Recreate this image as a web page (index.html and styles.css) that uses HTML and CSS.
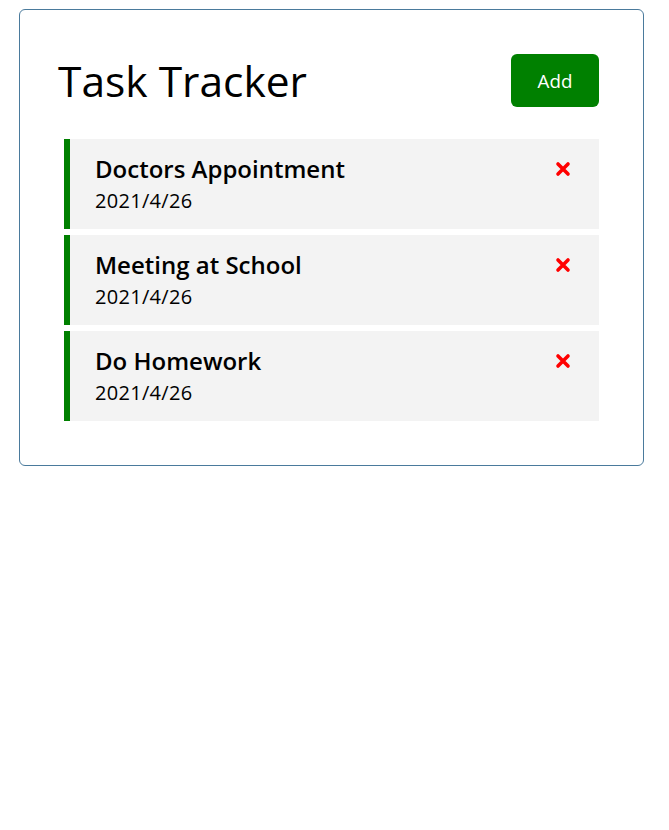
FILE: index.html
```html
<!DOCTYPE html>
<html lang="en">
<head>
<meta charset="utf-8">
<title>Task Tracker</title>
<link rel="stylesheet" href="styles.css">
</head>
<body>
<div class="container">
  <header class="header">
    <h1 class="title">Task Tracker</h1>
    <button class="btn">Add</button>
  </header>
  <div class="tasks">
    <div class="task reminder">
      <div class="task-body">
        <h3 class="task-title">Doctors Appointment</h3>
        <p class="task-date">2021/4/26</p>
      </div>
      <svg class="del" viewBox="0 0 16 16" width="16" height="16"><path d="M3 3 L13 13 M13 3 L3 13" stroke="#ff0000" stroke-width="3.6" stroke-linecap="round"/></svg>
    </div>
    <div class="task reminder">
      <div class="task-body">
        <h3 class="task-title">Meeting at School</h3>
        <p class="task-date">2021/4/26</p>
      </div>
      <svg class="del" viewBox="0 0 16 16" width="16" height="16"><path d="M3 3 L13 13 M13 3 L3 13" stroke="#ff0000" stroke-width="3.6" stroke-linecap="round"/></svg>
    </div>
    <div class="task reminder">
      <div class="task-body">
        <h3 class="task-title">Do Homework</h3>
        <p class="task-date">2021/4/26</p>
      </div>
      <svg class="del" viewBox="0 0 16 16" width="16" height="16"><path d="M3 3 L13 13 M13 3 L3 13" stroke="#ff0000" stroke-width="3.6" stroke-linecap="round"/></svg>
    </div>
  </div>
</div>
</body>
</html>
```
FILE: styles.css
```css
* {
  box-sizing: border-box;
  margin: 0;
  padding: 0;
}

body {
  font-family: "Open Sans", "Noto Sans", sans-serif;
  background: #fff;
  color: #000;
}

.container {
  width: 625px;
  margin: 9px 0 0 19px;
  border: 1px solid #4a7a9c;
  border-radius: 6px;
  padding: 39px;
}

.header {
  display: flex;
  justify-content: space-between;
  align-items: center;
  margin-bottom: 27px;
}

.title {
  font-size: 42.5px;
  font-weight: 500;
  line-height: 60px;
  letter-spacing: 0;
  margin-left: -1px;
}

.btn {
  font-family: inherit;
  background: #008000;
  color: #fff;
  border: none;
  border-radius: 6px;
  margin: 5px;
  width: 88px;
  height: 53px;
  font-size: 18.75px;
}

.tasks {
  display: flex;
  flex-direction: column;
  gap: 6px;
  padding: 0 5px 5px;
}

.task {
  background: #f3f3f3;
  height: 90px;
  padding: 13px 28px 12px 25px;
  display: flex;
  justify-content: space-between;
  align-items: flex-start;
}

.task.reminder {
  border-left: 6px solid #008000;
}

.task-title {
  font-size: 24px;
  font-weight: 600;
  line-height: 34px;
  letter-spacing: 0;
}

.task-date {
  font-size: 20px;
  line-height: 30px;
  letter-spacing: 0.3px;
}

.del {
  margin-top: 9px;
}
```
